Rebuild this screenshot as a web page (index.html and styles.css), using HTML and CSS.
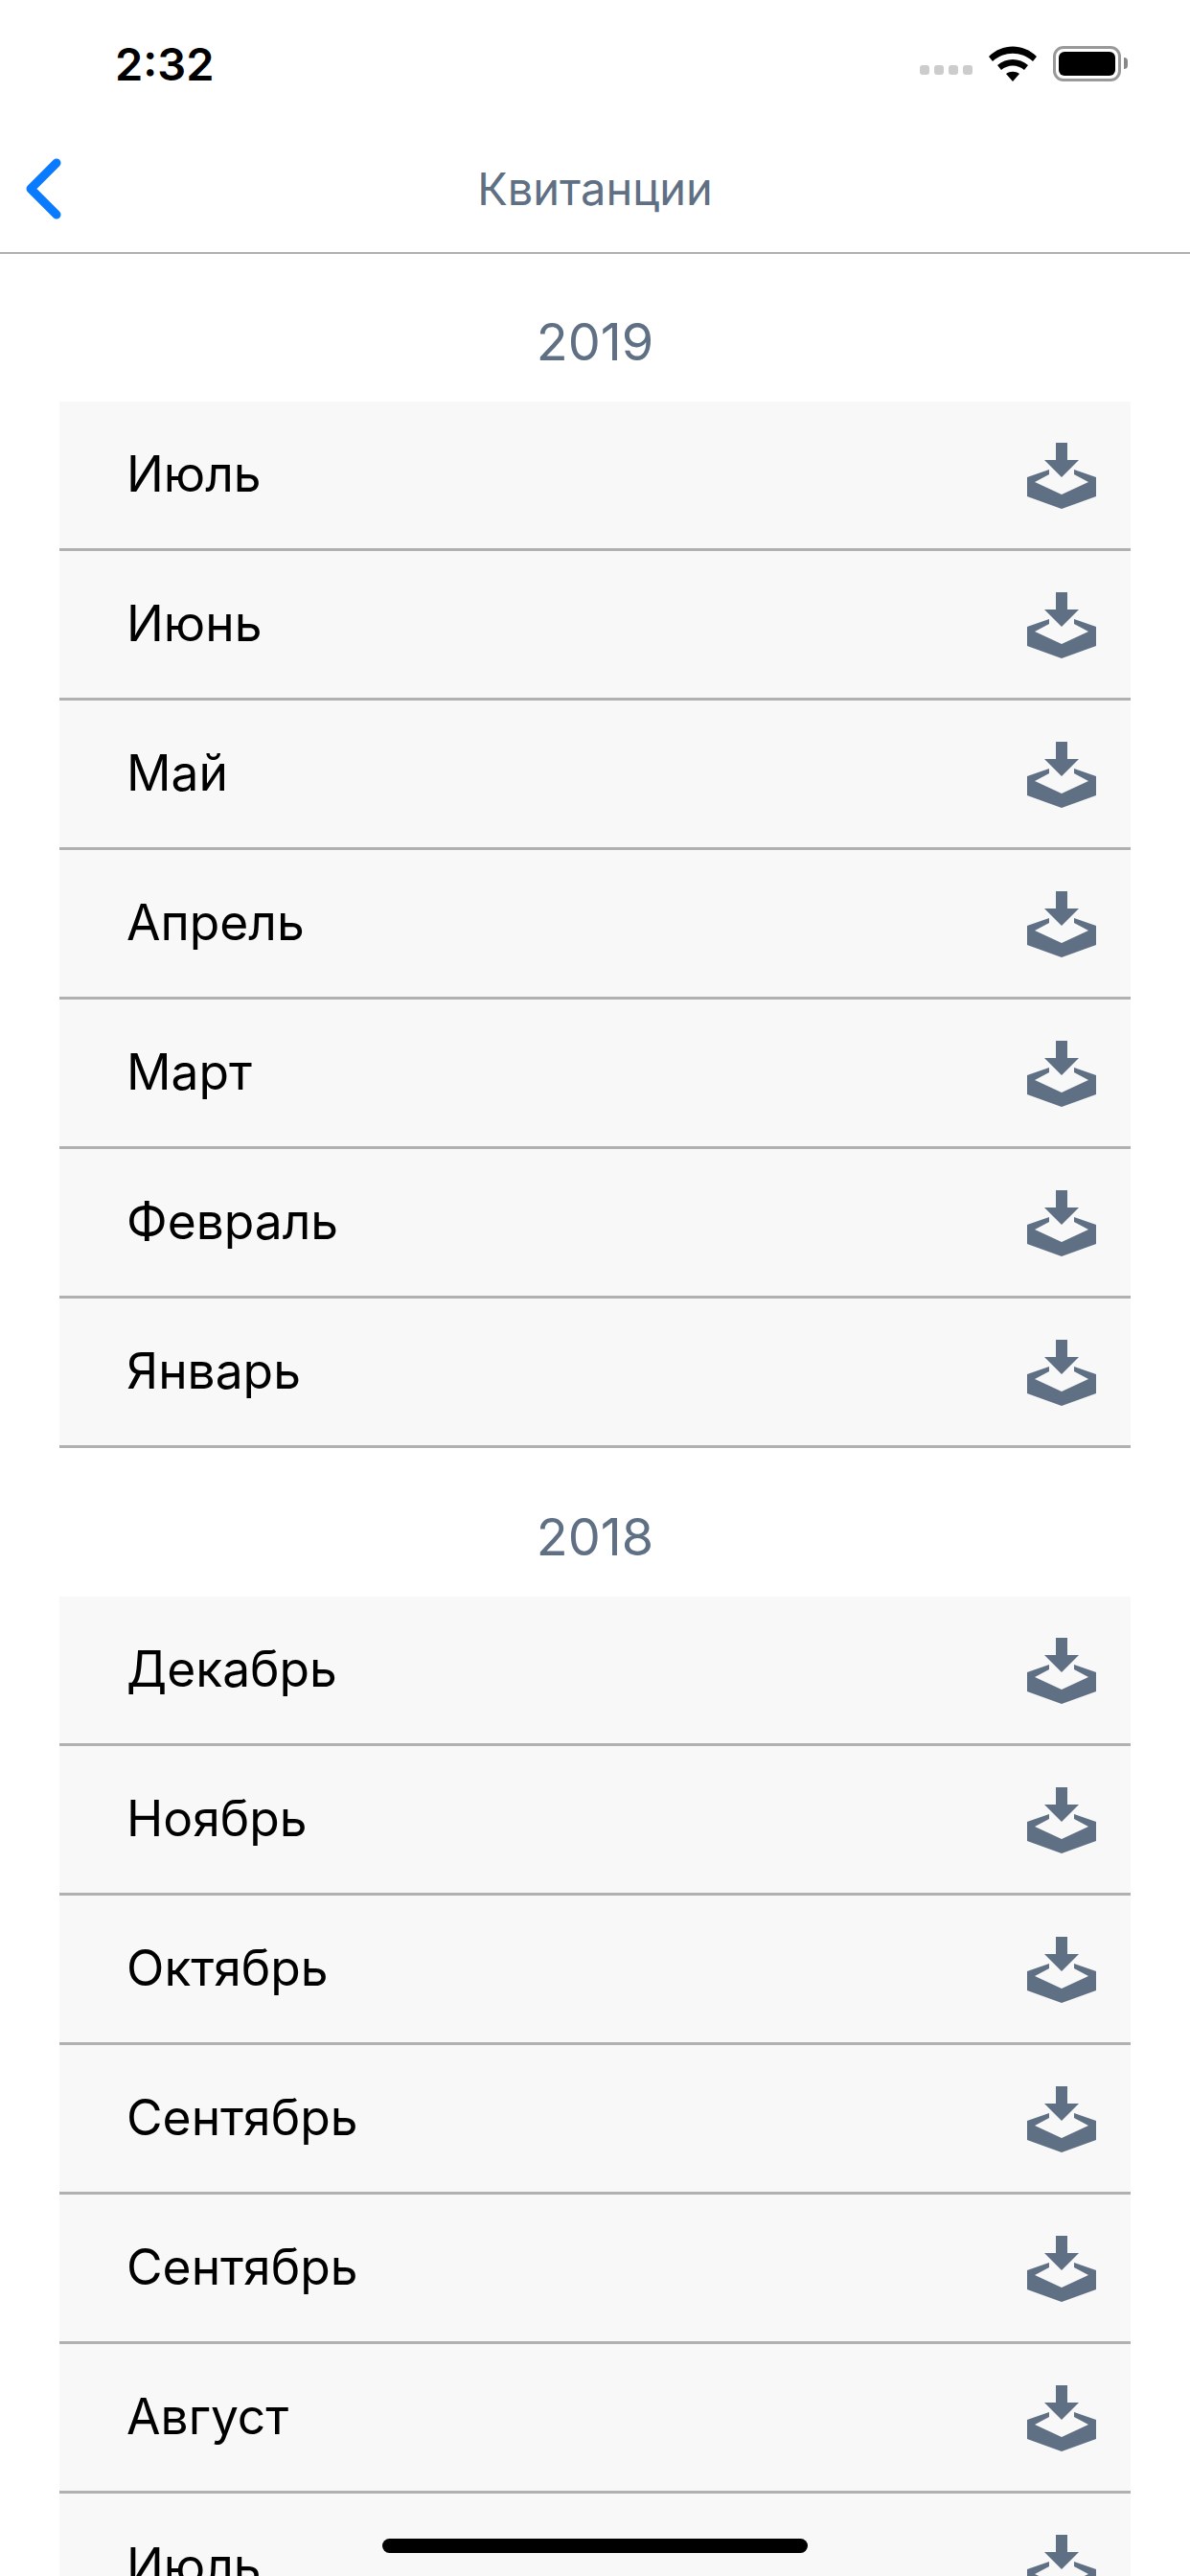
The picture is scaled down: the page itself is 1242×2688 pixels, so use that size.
FILE: index.html
```html
<!DOCTYPE html>
<html lang="ru">
<head>
    <meta charset="UTF-8">
    <meta name="viewport" content="width=device-width, initial-scale=1.0">
    <title>Квитанции</title>
    <link rel="stylesheet" href="styles.css">
</head>
<body>
    <svg class="defs" width="0" height="0">
        <symbol id="download" viewBox="0 0 72 70">
            <path d="M30 0h12v18h12L36 36 18 18h12z"/>
            <path d="M23 28v5L8 41l28 13 28-13-15-8v-5l23 8v20L36 69 0 56V36z"/>
        </symbol>
    </svg>
    <div class="screen">
        <div class="status-bar">
            <span class="time">2:32</span>
            <div class="status-icons">
                <div class="signal"><i></i><i></i><i></i><i></i></div>
                <svg class="wifi" width="50" height="37" viewBox="0 0 50 37">
                    <path d="M0 11C14-3 36-3 50 11l-4 5C34 5 16 5 4 16z"/>
                    <path d="M9 20c9-8 23-8 32 0l-4 5c-7-6-17-6-24 0z"/>
                    <path d="M18 29c4-3 10-3 14 0l-7 8z"/>
                </svg>
                <div class="battery"><div class="battery-fill"></div></div>
                <div class="battery-nub"></div>
            </div>
        </div>
        <div class="nav-bar">
            <svg class="back" width="40" height="64" viewBox="0 0 40 64">
                <path d="M33 5 6 32l27 27"/>
            </svg>
            <span class="nav-title">Квитанции</span>
        </div>

        <div class="year">2019</div>
        <ul class="months">
            <li><span>Июль</span><svg class="dl"><use href="#download"/></svg></li>
            <li><span>Июнь</span><svg class="dl"><use href="#download"/></svg></li>
            <li><span>Май</span><svg class="dl"><use href="#download"/></svg></li>
            <li><span>Апрель</span><svg class="dl"><use href="#download"/></svg></li>
            <li><span>Март</span><svg class="dl"><use href="#download"/></svg></li>
            <li><span>Февраль</span><svg class="dl"><use href="#download"/></svg></li>
            <li><span>Январь</span><svg class="dl"><use href="#download"/></svg></li>
        </ul>

        <div class="year">2018</div>
        <ul class="months">
            <li><span>Декабрь</span><svg class="dl"><use href="#download"/></svg></li>
            <li><span>Ноябрь</span><svg class="dl"><use href="#download"/></svg></li>
            <li><span>Октябрь</span><svg class="dl"><use href="#download"/></svg></li>
            <li><span>Сентябрь</span><svg class="dl"><use href="#download"/></svg></li>
            <li><span>Сентябрь</span><svg class="dl"><use href="#download"/></svg></li>
            <li><span>Август</span><svg class="dl"><use href="#download"/></svg></li>
            <li><span>Июль</span><svg class="dl"><use href="#download"/></svg></li>
        </ul>
    </div>
    <div class="home-bar"></div>
</body>
</html>
```
FILE: styles.css
```css
html, body {
    margin: 0;
    height: 2688px;
    overflow: hidden;
    background: #fff;
}

body {
    font-family: Inter, "Noto Sans", sans-serif;
    color: #000;
}

.defs {
    display: block;
}

.status-bar {
    height: 132px;
    display: flex;
    justify-content: space-between;
    align-items: center;
    padding: 0 65px 0 120px;
    box-sizing: border-box;
}

.time {
    font-size: 47px;
    font-weight: 600;
}

.status-icons {
    display: flex;
    align-items: center;
}

.signal {
    display: flex;
    gap: 5px;
    margin: 14px 17px 0 0;
}

.signal i {
    width: 10px;
    height: 10px;
    border-radius: 3px;
    background: #ccc;
}

.wifi {
    margin-right: 17px;
}

.battery {
    width: 71px;
    height: 37px;
    box-sizing: border-box;
    border: 3px solid #999;
    border-radius: 11px;
    padding: 3px;
}

.battery-fill {
    height: 100%;
    background: #000;
    border-radius: 6px;
}

.battery-nub {
    width: 4px;
    height: 12px;
    margin-left: 3px;
    background: #888;
    border-radius: 0 4px 4px 0;
}

.nav-bar {
    position: relative;
    height: 133px;
    box-sizing: border-box;
    border-bottom: 2px solid #b0b0b0;
    display: flex;
    align-items: center;
    justify-content: center;
}

.back {
    position: absolute;
    left: 26px;
    top: 33px;
    fill: none;
    stroke: #0a7aff;
    stroke-width: 9;
    stroke-linecap: round;
    stroke-linejoin: round;
}

.nav-title {
    font-size: 47px;
    color: #5f6f84;
    margin-bottom: 2px;
}

.year {
    height: 154px;
    box-sizing: border-box;
    padding-top: 62px;
    text-align: center;
    font-size: 54px;
    line-height: 60px;
    color: #5f6f84;
}

.months + .year {
    height: 155px;
    padding-top: 63px;
}

.months {
    list-style: none;
    margin: 0 62px;
    padding: 0;
    background: #f8f8f8;
}

.months li {
    height: 156px;
    box-sizing: border-box;
    border-bottom: 3px solid #b0b0b0;
    padding: 0 36px 0 70px;
    display: flex;
    align-items: center;
    justify-content: space-between;
    font-size: 51.5px;
}

.months li span {
    margin-bottom: 4px;
}

.dl {
    width: 72px;
    height: 70px;
    margin-top: 3px;
    fill: #5f6f84;
}

.home-bar {
    position: fixed;
    left: 399px;
    top: 2649px;
    width: 444px;
    height: 15px;
    border-radius: 8px;
    background: #000;
}
```
